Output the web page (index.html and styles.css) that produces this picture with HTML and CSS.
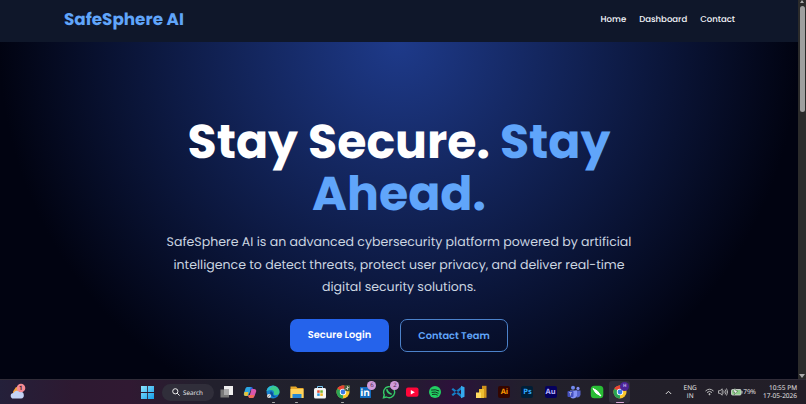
FILE: index.html
```html
<!DOCTYPE html>
<html lang="en">
<head>
<meta charset="utf-8">
<title>SafeSphere AI</title>
<link rel="stylesheet" href="styles.css">
</head>
<body>
<div class="viewport">
  <div class="page">
    <header class="navbar">
      <div class="logo">SafeSphere AI</div>
      <nav class="links"><a>Home</a><a>Dashboard</a><a>Contact</a></nav>
    </header>
    <main class="hero">
      <h1><span>Stay Secure. <span class="accent">Stay</span></span><span class="accent">Ahead.</span></h1>
      <p><span>SafeSphere AI is an advanced cybersecurity platform powered by artificial</span><span>intelligence to detect threats, protect user privacy, and deliver real-time</span><span>digital security solutions.</span></p>
      <div class="buttons"><a class="btn primary">Secure Login</a><a class="btn outline">Contact Team</a></div>
    </main>
  </div>
  <div class="scrollbar"><i class="up"></i><i class="thumb"></i><i class="down"></i></div>
</div>
<footer class="taskbar">
  <div class="weather">
    <svg width="18" height="18" viewBox="0 0 18 18"><path d="M4 8.500 7 4l3 1v6H4z" fill="#f5a33b"/><path d="M4.500 15.500a2.800 2.800 0 0 1 0-5.600 4 4 0 0 1 6.500-1 3.300 3.300 0 0 1 1 6.600z" fill="#c3d3f5"/><circle cx="12" cy="5" r="4.300" fill="#f58a94"/></svg><b>1</b>
  </div>
  <svg class="start" width="13" height="13" viewBox="0 0 13 13"><defs><linearGradient id="w" x2="1" y2="1"><stop stop-color="#8be4ff"/><stop offset="1" stop-color="#159ee8"/></linearGradient></defs><path d="M0 0h6.100v6.100H0zM6.900 0H13v6.100H6.900zM0 6.900h6.100V13H0zM6.900 6.900H13V13H6.900z" fill="url(#w)"/></svg>
  <div class="search"><svg width="8" height="8" viewBox="0 0 8 8" fill="none" stroke="#eee"><circle cx="3.300" cy="3.300" r="2.600"/><path d="M5.200 5.200 7.600 7.600"/></svg><span>Search</span></div>
  <div class="apps">
    <div class="app"><svg viewBox="0 0 14 14"><path d="M4 1h9v9H4z" fill="#eee"/><path d="M.5 4.500h8.500v8H.5z" fill="#777"/><path d="M4 4.500h5V10H4z" fill="#aaa"/></svg></div>
    <div class="app"><svg viewBox="0 0 14 14"><path d="M4 2h5L6.500 8 5 11H3Q0 11 1 8L2.500 3.500Q3 2 4 2" fill="#2ba6e3"/><path d="M1.500 7h4L4.500 11H3Q0 11 1.500 7" fill="#e2c33c"/><path d="M8 2q2 0 2 2l.5 1H7L8 2" fill="#3458d4"/><path d="M8.500 4H11q3 0 2 3l-1.500 4Q11 13 9.500 13H6z" fill="#da57ad"/><path d="M5.500 10h6Q11 13 9.500 13H7Q5.500 13 5 11" fill="#f06c56"/></svg></div>
    <div class="app run"><svg viewBox="0 0 14 14"><circle cx="7" cy="7" r="6.500" fill="#1681cf"/><path d="M.6 6A6.500 6.500 0 0 1 13.500 7q0 3-3.500 3-3 0-2-2 0-3-3-3Q2 5 .6 6" fill="#3acb8d"/><path d="M.6 6A6.500 6.500 0 0 1 9 1Q4 1 3.500 5 2 5 .6 6" fill="#2bb5dd"/><path d="M5 6q-2 2 0 4 2 3 6 2-5-1-4-4z" fill="#0b4f9b"/><circle cx="3" cy="11" r="2" fill="#ddd"/><path d="m2 12 2-2" stroke="#777" stroke-width=".7"/></svg></div>
    <div class="app run"><svg viewBox="0 0 14 14"><path d="M.5 1.500H6L7.500 3h6v10H.5z" fill="#e6a72a"/><path d="M.5 4h13v9H.5z" fill="#ffd35c"/><path d="M2.500 9h9v4h-9z" fill="#2688d5"/></svg></div>
    <div class="app"><svg viewBox="0 0 14 14"><path d="M4.500 4V1.500h5V4" fill="none" stroke="#76c6f2"/><rect x="1" y="3" width="12" height="10.500" rx="1.500" fill="#f5f5f5"/><path d="M4.200 5.300h2.500v2.500H4.200z" fill="#e64a33"/><path d="M7.300 5.300h2.500v2.500H7.300z" fill="#75b52c"/><path d="M4.200 8.400h2.500v2.500H4.200z" fill="#2b9be3"/><path d="M7.300 8.400h2.500v2.500H7.300z" fill="#f2b51e"/></svg></div>
    <div class="app run"><svg viewBox="0 0 14 14"><g id="chrome"><circle cx="7" cy="7" r="6.500" fill="#f9c72b"/><path d="M7 7 1.400 3.700A6.500 6.500 0 0 1 12.600 3.700z" fill="#e74335"/><path d="M7 7 1.400 3.700A6.500 6.500 0 0 0 7 13.500z" fill="#2aa454"/><circle cx="7" cy="7" r="3.200" fill="#fff"/><circle cx="7" cy="7" r="2.400" fill="#397be7"/></g><circle cx="11.500" cy="3" r="3.300" fill="#455f3d"/><path d="m9.500 4 4-2M11.500 1v4" stroke="#ded8cc" stroke-width=".8"/></svg></div>
    <div class="app"><svg viewBox="0 0 14 14"><path d="M1 2h11v11H1z" fill="#136bbd"/></svg><b class="in">in</b><b class="badge">6</b></div>
    <div class="app"><svg viewBox="0 0 14 14" fill="none"><path d="m1.500 12.800.8-3A5.500 5.500 0 1 1 4.500 12z" stroke="#35c968" stroke-width="1.400"/><path d="M4.700 4.300q1 4 5 5" stroke="#35c968" stroke-width="1.700"/></svg><b class="badge">2</b></div>
    <div class="app"><svg viewBox="0 0 14 14"><rect x="1" y="2.500" width="12.500" height="9.300" rx="2" fill="#ff0639"/><path d="m5.800 5 4 2.200-4 2.200z" fill="#fff"/></svg></div>
    <div class="app"><svg viewBox="0 0 14 14"><circle cx="7" cy="7" r="6" fill="#22cf62"/><path d="M3.500 5q4-1 7.300.8M4 7.300q3.500-1 6.200.8M4.400 9.400q3-.8 5 .6" fill="none" stroke="#123322" stroke-linecap="round"/></svg></div>
    <div class="app"><svg viewBox="0 0 14 14"><path d="m.5 4.500 1.500-1.500 9 7V13zM.5 9.500 2 11l9-7V1z" fill="#167fc6"/><path d="m10 .8 3.500 1.500v9.400L10 13.200z" fill="#35a9ed"/></svg></div>
    <div class="app"><svg viewBox="0 0 14 14"><path d="M8 .8h4.500v12H8z" fill="#cf921c"/><path d="M5 4h5v9H5z" fill="#eebd31"/><path d="M2 7.500h5V13H2z" fill="#ffda62"/></svg></div>
    <div class="app"><b class="adobe ai">Ai</b></div>
    <div class="app"><b class="adobe ps">Ps</b></div>
    <div class="app"><b class="adobe au">Au</b></div>
    <div class="app"><svg viewBox="0 0 14 14"><circle cx="6" cy="2.800" r="2" fill="#7189ef"/><circle cx="11" cy="3.400" r="1.600" fill="#828ff4"/><path d="M8 5.500h5.500V10q-1 3-4 2.500z" fill="#5865cd"/><path d="M3 5.500h7v5q-1 3-4 3-3-.5-3-3z" fill="#8391f5"/><rect x=".5" y="6" width="6" height="6" rx="1" fill="#4450bd"/><path d="M2 7.600h3M3.500 7.600v3" stroke="#ccd" stroke-width=".7"/></svg></div>
    <div class="app"><svg viewBox="0 0 14 14"><rect x=".8" y=".8" width="12.500" height="12.500" rx="3.500" fill="#29bd35"/><path d="M3 3.500q5 1.500 8 7.500-6-2-8-7.500" fill="#fff" stroke="#fff"/></svg></div>
    <div class="app active"><svg viewBox="0 0 14 14"><use href="#chrome"/></svg><b class="profile">H</b></div>
  </div>
  <div class="tray">
    <svg class="chev" width="7" height="5" viewBox="0 0 7 5"><path d="m.8 4 2.700-2.700L6.200 4" fill="none" stroke="#ddd"/></svg>
    <div class="lang">ENG<br>IN</div>
    <svg class="wifi" width="9" height="8" viewBox="0 0 9 8" fill="none" stroke="#bbb"><path d="M.5 3q4-3.600 8 0M2 4.500q2.500-2.200 5 0"/><circle cx="4.500" cy="6.200" r=".6" fill="#ddd"/></svg>
    <svg class="sound" width="10" height="8" viewBox="0 0 10 8" fill="none" stroke="#ccc" stroke-width=".8"><path d="M.5 2.700H2L4.200.8v6.400L2 5.300H.5zM5.700 2.500q1 1.500 0 3M7.200 1.500q1.700 2.500 0 5M8.500.5q2.300 3.500 0 7"/></svg>
    <svg class="battery" width="12" height="8" viewBox="0 0 12 8"><rect x=".5" y="1.500" width="9.500" height="5.500" rx="1" fill="#8fcf8b" stroke="#ddd" stroke-width=".8"/><path d="M11 3v2.500" stroke="#ccc"/><path d="M4 0 2 4h2L3 7l4-4H5z" fill="#eee" stroke="#254829" stroke-width=".4"/></svg>
    <span class="pct">79%</span>
    <div class="clock">10:55 PM<br>17-05-2026</div>
  </div>
</footer>
</body>
</html>
```

FILE: styles.css
```css
* { box-sizing: border-box; }
body { margin: 0; width: 806px; height: 404px; overflow: hidden; display: flex; flex-direction: column; background: #020617; font-family: Poppins, Inter, sans-serif; text-rendering: geometricPrecision; }
.viewport { height: 379px; display: flex; }
.page { width: 798px; display: flex; flex-direction: column; }
.navbar { height: 42px; padding: 0 63px 4px 64px; display: flex; align-items: center; justify-content: space-between; background: #0f172a; }
.logo { color: #60a5fa; font-size: 16.800px; font-weight: 700; white-space: nowrap; }
.links { display: flex; gap: 13px; padding-top: 1.500px; color: #f4f6fb; font-size: 8.540px; font-weight: 500; }
.hero { flex: 1; padding-top: 74px; display: flex; flex-direction: column; align-items: center; background: radial-gradient(circle 400px at 50% 0, #1e3a8a 0%, #010311 100%); }
h1 { margin: 0; font-size: 47.400px; font-weight: 700; line-height: 52px; color: #fff; text-align: center; }
h1 > span, p > span { display: block; white-space: nowrap; }
.accent { color: #60a5fa; }
p { margin: 12px 0 0; color: #cbd5e1; font-size: 12.560px; line-height: 22.700px; text-align: center; }
.buttons { display: flex; gap: 11px; margin-top: 18.700px; }
.btn { height: 33px; display: flex; align-items: center; justify-content: center; border-radius: 7px; font-size: 9.800px; font-weight: 600; }
.primary { width: 99px; background: #2563eb; color: #fff; padding-top: 1px; }
.outline { width: 108px; border: 1px solid #4c82ca; color: #60a5fa; padding-top: 3px; }
.scrollbar { width: 8px; background: #2b2b2b; display: flex; flex-direction: column; align-items: center; }
.up { border: 2.500px solid transparent; border-top: 0; border-bottom: 3px solid #aaa; }
.thumb { width: 5px; height: 106px; margin-top: 3px; border-radius: 3px; background: #9f9f9f; }
.down { margin-top: auto; margin-bottom: 1px; border: 3px solid transparent; border-bottom: 0; border-top: 4px solid #aaa; }
.taskbar { height: 25px; display: flex; align-items: center; color: #eee; font-family: "Open Sans", sans-serif; border-top: 1px solid #302c38; background: linear-gradient(90deg, #24203a 0, #2d1931 9%, #301932 16%, #22202d 26%, #20212c 48%, #2c123a 56%, #241a32 61%, #22202b 66%, #221e27 100%); }
.weather { width: 141px; padding-left: 9px; position: relative; display: flex; }
.weather b { position: absolute; left: 19px; top: 0; font-size: 6px; line-height: 10px; color: #421a25; }
.search { width: 52px; height: 17px; margin-left: 7.500px; border-radius: 9px; background: #302e3a; display: flex; align-items: center; justify-content: center; gap: 3px; font-size: 6.300px; }
.apps { display: flex; margin-left: 2.200px; }
.app { width: 23.100px; height: 22px; display: flex; align-items: center; justify-content: center; position: relative; }
.app svg { width: 14px; height: 14px; }
.run::after, .active::after { content: ""; position: absolute; bottom: 0; width: 3px; height: 1.500px; border-radius: 1px; background: #aaa; }
.active { background: #302e3b; border-radius: 3px; width: 21px; margin-left: 1px; }
.active::after { width: 8px; background: #d9a9d8; }
.in { position: absolute; left: 6px; top: 4px; color: #fff; font: 700 10px/14px "Open Sans", sans-serif; }
.badge { position: absolute; right: 1px; top: 0; width: 9px; height: 9px; border-radius: 50%; background: #d09bda; color: #432047; font-size: 6px; line-height: 9px; text-align: center; font-weight: 400; }
.profile { position: absolute; right: 1px; top: 1px; width: 9px; height: 9px; border-radius: 50%; background: #4b2496; color: #ccb8ed; font-size: 4.500px; line-height: 9px; text-align: center; }
.adobe { width: 12px; height: 12px; border-radius: 2px; font-size: 7.500px; line-height: 12px; text-align: center; }
.ai { background: #330500; color: #ff9a00; }
.ps { background: #001e36; color: #31a8ff; }
.au { background: #05005d; color: #b7b4ff; }
.tray { flex: 1; padding-right: 9px; display: flex; align-items: center; justify-content: flex-end; font-size: 6.500px; line-height: 8.500px; white-space: nowrap; }
.lang { margin-left: 11px; width: 14px; text-align: center; }
.wifi { margin-left: 8px; }
.sound { margin-left: 4px; }
.battery { margin-left: 3px; }
.clock { margin-left: 6px; width: 35px; text-align: right; }
```
